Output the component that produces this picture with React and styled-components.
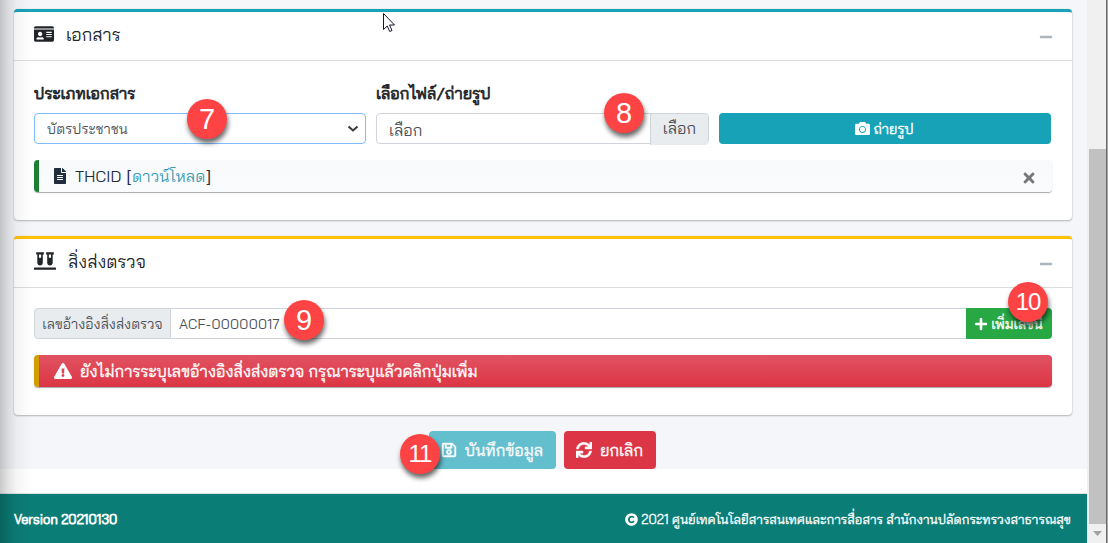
import React from "react";
import styled, { createGlobalStyle } from "styled-components";
import {
  FaIdCard, FaVials, FaFileAlt, FaTimes, FaMinus, FaCamera, FaPlus,
  FaExclamationTriangle, FaRegSave, FaSync, FaCopyright,
} from "react-icons/fa";

const Global = createGlobalStyle`
  *, *::before, *::after { box-sizing: border-box; }
  html, body { margin: 0; overflow: hidden; }
  body {
    font-family: "Bai Jamjuree", "Noto Sans Thai", "Noto Sans", sans-serif;
    font-size: 16px; line-height: 24px; color: #212529; background: #fff;
  }
  button, input { font: inherit; }
  svg { display: block; flex: none; }
`;

const Screen = styled.div`
  position: relative;
  display: flex;
  width: 1108px;
  height: 543px;
  overflow: hidden;
`;
const Page = styled.div`
  display: flex;
  flex-direction: column;
  width: 1087px;
`;
const Content = styled.main`
  height: 469px;
  padding: 9px 15px 0 14px;
  background: #f4f6f9;
`;
const Card = styled.section`
  height: ${(p) => p.$height}px;
  margin-bottom: 16px;
  border-top: 3px solid ${(p) => p.$accent};
  border-radius: 4px;
  background: #fff;
  box-shadow: 0 0 1px rgba(0, 0, 0, 0.2), 0 1px 2px rgba(0, 0, 0, 0.25);
`;
const CardHeader = styled.header`
  display: flex;
  align-items: center;
  height: 49px;
  padding: 0 19px 4px 20px;
  border-bottom: 1px solid #dcdddf;
`;
const CardTitle = styled.h3`
  flex: 1;
  margin: -1px 0 0 ${(p) => p.$gap}px;
  font-size: 17.6px;
  font-weight: 400;
`;
const Collapse = styled.span`
  color: #adb5bd;
  padding-top: 6px;
`;
const CardBody = styled.div`
  padding: 20px 20px 0;
`;
const Text = styled.span`
  display: inline-block;
  white-space: nowrap;
  font-size: ${(p) => p.$size || 14}px;
  font-weight: 400;
  letter-spacing: ${(p) => p.$track || 0}px;
  -webkit-text-stroke: ${(p) => p.$heavy || 0}px currentColor;
`;
const Columns = styled.div`
  display: grid;
  grid-template-columns: 332px 333px 332px;
  gap: 10px;
  align-items: end;
`;
const Label = styled.label`
  display: block;
  height: 32px;
`;
const Select = styled.div`
  display: flex;
  align-items: center;
  justify-content: space-between;
  height: 31px;
  padding: 0 6px 0 12px;
  border: 1px solid #80bdff;
  border-radius: 4px;
  color: #495057;
`;
const FilePicker = styled.div`
  display: flex;
  height: 31px;
  border: 1px solid #ced4da;
  border-radius: 4px;
  color: #495057;
`;
const FileName = styled.span`
  flex: 1;
  padding: 4px 12px;
`;
const Browse = styled.span`
  display: flex;
  justify-content: center;
  width: 58px;
  height: 31px;
  padding-top: 2px;
  border-left: 1px solid #ced4da;
  border-radius: 0 3px 3px 0;
  background: #e9ecef;
`;
const Button = styled.button`
  display: flex;
  align-items: center;
  justify-content: center;
  gap: ${(p) => p.$gap || 3}px;
  width: ${(p) => p.$width}px;
  height: ${(p) => p.$height || 31}px;
  padding: 0 1px 0 0;
  border: 0;
  border-radius: ${(p) => p.$radius || "4px"};
  color: #fff;
  background: ${(p) => p.$color};
  opacity: ${(p) => (p.disabled ? 0.65 : 1)};
`;
const Callout = styled.div`
  display: flex;
  align-items: center;
  height: 32px;
  margin-top: 16px;
  padding: 0 15px 0 ${(p) => p.$inset}px;
  border-left: 5px solid ${(p) => p.$edge};
  border-radius: 4px;
  color: ${(p) => p.$ink};
  background: ${(p) => p.$fill};
  box-shadow: 0 1px 1px rgba(0, 0, 0, 0.35);
`;
const CalloutText = styled.div`
  flex: 1;
  margin-left: ${(p) => p.$gap}px;
`;
const CloseButton = styled.span`
  padding-top: 3px;
  color: #777;
`;
const Bracket = styled.span`
  font-family: "Liberation Sans", sans-serif;
  margin: 0 1px;
`;
const Link = styled.a`
  color: #3d9db3;
`;
const InputGroup = styled.div`
  display: flex;
  height: 31px;
`;
const Addon = styled.span`
  display: flex;
  align-items: center;
  justify-content: center;
  width: 137px;
  border: 1px solid #ced4da;
  border-radius: 4px 0 0 4px;
  color: #495057;
  background: #e9ecef;
`;
const Field = styled.div`
  flex: 1;
  display: flex;
  align-items: center;
  padding-left: 8px;
  border: solid #ced4da;
  border-width: 1px 0;
  color: #495057;
`;
const Actions = styled.div`
  display: flex;
  gap: 8px;
  padding-left: 415px;
`;
const Footer = styled.footer`
  display: flex;
  align-items: center;
  justify-content: space-between;
  height: 50px;
  margin-top: 24px;
  padding: 1px 16px 0 14px;
  border-top: 1px solid #dee2e6;
  color: #fff;
  background: #0b7d77;
`;
const Copyright = styled.div`
  display: flex;
  align-items: center;
  gap: 3px;
`;
const Scrollbar = styled.div`
  display: flex;
  flex-direction: column;
  width: 19px;
  padding: 149px 0 0 2px;
  background: #f0f0f0;
`;
const Thumb = styled.div`
  height: 375px;
  background: #c1c1c1;
`;
const ScrollArrow = styled.svg`
  margin: 7px auto 0 4px;
`;
const WindowEdge = styled.div`
  width: 2px;
  border-left: 1px solid #696969;
  background: #aaa;
`;
const SideShade = styled.div`
  position: absolute;
  inset: 0 auto 0 0;
  width: 32px;
  background: linear-gradient(to right, rgba(0,0,0,.21), rgba(0,0,0,.11) 25%, rgba(0,0,0,.04) 52%, transparent);
`;
const Marker = styled.div`
  position: absolute;
  left: ${(p) => p.$x}px;
  top: ${(p) => p.$y}px;
  display: flex;
  align-items: center;
  justify-content: center;
  width: 40px;
  height: 40px;
  border-radius: 50%;
  color: #fff;
  background: #fe4345;
  font: ${(p) => (p.$small ? 24 : 29)}px/38px "Liberation Sans", sans-serif;
  letter-spacing: ${(p) => (p.$small ? -1 : 0)}px;
  box-shadow: 1px 4px 5px rgba(0, 0, 0, 0.6);
`;
const Pointer = styled.svg`
  position: absolute;
  left: 382px;
  top: 12px;
`;

export default function App() {
  return (
    <Screen>
      <Global />
      <Page>
        <Content>
          <Card $accent="#17a2b8" $height={211}>
            <CardHeader>
              <FaIdCard size={20} />
              <CardTitle $gap={12}><Text $size={17.6}>เอกสาร</Text></CardTitle>
              <Collapse><FaMinus size={14} /></Collapse>
            </CardHeader>
            <CardBody>
              <Columns>
                <div>
                  <Label><Text $size={16} $heavy={0.75}>ประเภทเอกสาร</Text></Label>
                  <Select>
                    <Text $track={0.1}>บัตรประชาชน</Text>
                    <svg width="12" height="8" viewBox="0 0 12 8" fill="none" stroke="#343a40" strokeWidth="2"><path d="M1.5 1.5L6 5.5l4.5-4" /></svg>
                  </Select>
                </div>
                <div>
                  <Label><Text $size={16} $heavy={0.75}>เลือกไฟล์/ถ่ายรูป</Text></Label>
                  <FilePicker>
                    <FileName><Text $size={16}>เลือก</Text></FileName>
                    <Browse><Text $size={16}>เลือก</Text></Browse>
                  </FilePicker>
                </div>
                <Button $color="#17a2b8" $width={332}><FaCamera size={15} /><Text $heavy={0.35}>ถ่ายรูป</Text></Button>
              </Columns>
              <Callout $edge="#1e7e34" $ink="#1f2d3d" $inset={13} $fill="linear-gradient(#f8f9fa, #fafbfc)">
                <FaFileAlt size={16} />
                <CalloutText $gap={7}>
                  <Text $size={16} $track={0.1}>THCID <Bracket>[</Bracket><Link>ดาวน์โหลด</Link><Bracket>]</Bracket></Text>
                </CalloutText>
                <CloseButton><FaTimes size={16} /></CloseButton>
              </Callout>
            </CardBody>
          </Card>
          <Card $accent="#ffc107" $height={179}>
            <CardHeader>
              <FaVials size={22} />
              <CardTitle $gap={12}><Text $size={17.6}>สิ่งส่งตรวจ</Text></CardTitle>
              <Collapse><FaMinus size={14} /></Collapse>
            </CardHeader>
            <CardBody>
              <InputGroup>
                <Addon><Text>เลขอ้างอิงสิ่งส่งตรวจ</Text></Addon>
                <Field><Text $track={0.27}>ACF-00000017</Text></Field>
                <Button $color="#28a745" $width={86} $radius="0 4px 4px 0"><FaPlus size={14} /><Text $heavy={0.35}>เพิ่มเลขนี้</Text></Button>
              </InputGroup>
              <Callout $edge="#d39e00" $ink="#fff" $inset={15} $fill="linear-gradient(#e15361, #dc3545)">
                <FaExclamationTriangle size={18} />
                <CalloutText $gap={8}><Text $size={16} $heavy={0.35}>ยังไม่การระบุเลขอ้างอิงสิ่งส่งตรวจ กรุณาระบุแล้วคลิกปุ่มเพิ่ม</Text></CalloutText>
              </Callout>
            </CardBody>
          </Card>
          <Actions>
            <Button disabled $color="#17a2b8" $width={127} $height={38} $gap={8}><FaRegSave size={16} stroke="currentColor" strokeWidth="14" /><Text $size={16} $heavy={0.35}>บันทึกข้อมูล</Text></Button>
            <Button $color="#dc3545" $width={92} $height={38} $gap={8}><FaSync size={16} stroke="currentColor" strokeWidth="14" /><Text $size={16} $heavy={0.35}>ยกเลิก</Text></Button>
          </Actions>
        </Content>
        <Footer>
          <Text $size={12.8} $heavy={0.75} $track={0.06}>Version 20210130</Text>
          <Copyright><FaCopyright size={13} /><Text $size={12.85} $heavy={0.3}>2021 ศูนย์เทคโนโลยีสารสนเทศและการสื่อสาร สำนักงานปลัดกระทรวงสาธารณสุข</Text></Copyright>
        </Footer>
      </Page>
      <Scrollbar>
        <Thumb />
        <ScrollArrow width="9" height="5" viewBox="0 0 9 5"><path d="M0 0h9L4.5 5z" fill="#a3a3a3" /></ScrollArrow>
      </Scrollbar>
      <WindowEdge />
      <SideShade />
      <Marker $x={187} $y={99}>7</Marker>
      <Marker $x={604} $y={93}>8</Marker>
      <Marker $x={284} $y={300}>9</Marker>
      <Marker $x={1008} $y={282} $small>10</Marker>
      <Marker $x={400} $y={434} $small>11</Marker>
      <Pointer width="14" height="21" viewBox="0 0 14 21"><path d="M1.5 1.5v16l3.7-3.5 2.5 5.5 2.3-1-2.5-5.5h5z" fill="#fff" stroke="#16162a" /></Pointer>
    </Screen>
  );
}
